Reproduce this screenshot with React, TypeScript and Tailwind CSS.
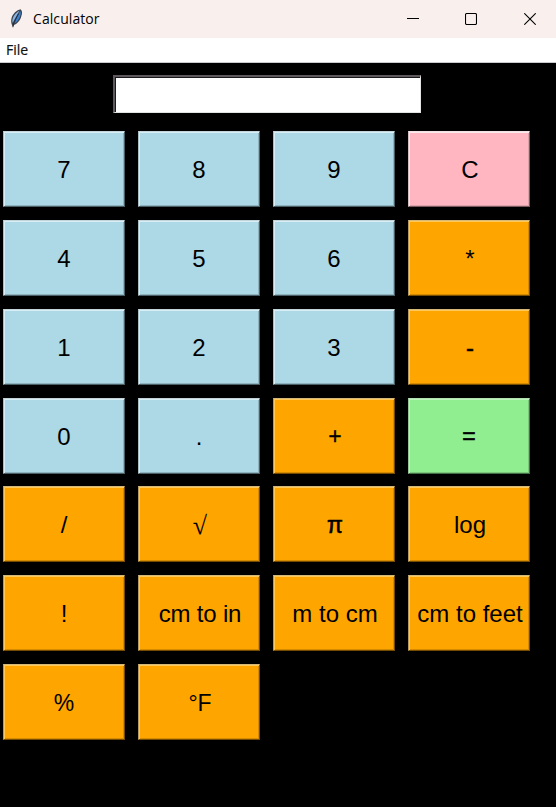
type Tone = "blue" | "pink" | "orange" | "green";

const tones: Record<Tone, string> = {
  blue: "bg-[#add8e6] border-t-[#c3d5da] border-l-[#a9bcc2] border-r-[#4b5f66] border-b-[#4b5f66] shadow-[inset_1px_1px_0_#d9eef4,inset_-1px_-1px_0_#8fb3be]",
  pink: "bg-[#ffb6c1] border-t-[#f0e2e4] border-l-[#d2bdc0] border-r-[#7d585e] border-b-[#7d585e] shadow-[inset_1px_1px_0_#ffe8eb,inset_-1px_-1px_0_#dba2aa]",
  orange: "bg-[#ffa500] border-t-[#d5b978] border-l-[#b59b62] border-r-[#754c00] border-b-[#754c00] shadow-[inset_1px_1px_0_#ffc95a,inset_-1px_-1px_0_#d68a00]",
  green: "bg-[#90ee90] border-t-[#b4e3b4] border-l-[#98c498] border-r-[#456f45] border-b-[#456f45] shadow-[inset_1px_1px_0_#bbf5bb,inset_-1px_-1px_0_#7bc87b]",
};

const keys: { label: string; tone: Tone; text?: string }[] = [
  { label: "7", tone: "blue" },
  { label: "8", tone: "blue" },
  { label: "9", tone: "blue" },
  { label: "C", tone: "pink", text: "pl-[2px]" },
  { label: "4", tone: "blue" },
  { label: "5", tone: "blue" },
  { label: "6", tone: "blue" },
  { label: "*", tone: "orange", text: "pl-[2px]" },
  { label: "1", tone: "blue" },
  { label: "2", tone: "blue" },
  { label: "3", tone: "blue" },
  { label: "-", tone: "orange", text: "pl-[2px] [-webkit-text-stroke:0.500px_black]" },
  { label: "0", tone: "blue" },
  { label: ".", tone: "blue" },
  { label: "+", tone: "orange", text: "pl-[2px] text-[23px] [-webkit-text-stroke:0.300px_black]" },
  { label: "=", tone: "green", text: "text-[23px] [-webkit-text-stroke:0.600px_black]" },
  { label: "/", tone: "orange" },
  { label: "√", tone: "orange", text: "pl-[2px] text-[26px] font-['Liberation_Serif',serif]" },
  { label: "π", tone: "orange", text: "pl-[2px] text-[23px] [-webkit-text-stroke:0.600px_black]" },
  { label: "log", tone: "orange", text: "pl-[2px]" },
  { label: "!", tone: "orange" },
  { label: "cm to in", tone: "orange", text: "pl-[2px] tracking-[-0.200px]" },
  { label: "m to cm", tone: "orange", text: "pl-[2px]" },
  { label: "cm to feet", tone: "orange", text: "pl-[2px]" },
  { label: "%", tone: "orange", text: "text-[23px]" },
  { label: "°F", tone: "orange", text: "pl-[2px] text-[23px]" },
];

function Feather() {
  return (
    <svg width="16" height="20" viewBox="0 0 16 20" className="shrink-0">
      <path d="M12.600 .3C8.800 .9 4.600 5 3.500 9.200c-.6 2.500-.3 4.700.3 6.300l1.200 3.500.9-3.100c3-1.100 5.700-3.800 6.900-7 1.100-3.200 2.200-5.900-.2-8.600z" fill="#3b424b" />
      <path d="M11.600 1.400C8.500 3 5.500 6.300 4.700 9.600c-.5 1.800-.4 3.300 0 4.500C6.600 9.800 9 5.900 11.600 1.400z" fill="#8ab5e2" />
      <path d="M12.300 2c1 2.300.2 4.300-.7 6.600-.9 2.400-2.900 4.700-5.400 6.100C7.800 10.500 9.800 6.200 12.300 2z" fill="#3c80cf" />
      <path d="M10.500 5C8.500 8.500 6.300 12.400 5 17.500" stroke="#1c2a3b" strokeWidth=".8" fill="none" />
    </svg>
  );
}

function TitleBar() {
  return (
    <header className="flex h-[38px] items-center bg-[#f9f0ee] font-['Open_Sans',sans-serif] text-black">
      <div className="flex flex-1 items-center pl-2">
        <Feather />
        <h1 className="ml-[9px] text-[14px] leading-5 tracking-[0.080px]">Calculator</h1>
      </div>
      <svg width="12" height="12" viewBox="0 0 12 12" className="mr-[46px]" aria-label="Minimize">
        <path d="M0 5.500H12" stroke="#000" />
      </svg>
      <svg width="12" height="12" viewBox="0 0 12 12" className="mr-[47px]" aria-label="Maximize">
        <rect x=".5" y=".5" width="11" height="11" rx="1.200" fill="none" stroke="#000" strokeWidth="1.100" />
      </svg>
      <svg width="12" height="12" viewBox="0 0 12 12" className="mr-5" aria-label="Close">
        <path d="M.3 .3L11.700 11.700M11.700 .3L.3 11.700" stroke="#000" strokeWidth="1.100" />
      </svg>
    </header>
  );
}

export default function App() {
  return (
    <div className="flex h-[807px] w-[556px] flex-col overflow-hidden bg-black">
      <TitleBar />
      <nav className="flex h-[25px] items-center border-b border-[#c9cccd] bg-white pl-[6px] font-['Open_Sans',sans-serif] text-[14px] leading-5 text-[#111] [-webkit-text-stroke:0.200px_#111]">
        File
      </nav>
      <main className="flex flex-1 flex-col pt-3">
        <div className="ml-[113px] h-[38px] w-[308px] border-t-2 border-r border-b border-l-2 border-t-[#5e595c] border-r-[#e3e3e3] border-b-[#dfe3e1] border-l-[#5e595c]">
          <div className="h-full border-t border-l border-[#1c191c] bg-white" />
        </div>
        <div className="mt-[18.300px] ml-[3px] grid grid-cols-[repeat(4,122px)] gap-x-[13px] gap-y-[12.800px]">
          {keys.map((k) => (
            <button
              key={k.label}
              className={`flex h-[76px] items-center justify-center border pt-0.5 font-['Liberation_Sans',Arial,sans-serif] whitespace-nowrap text-black ${tones[k.tone]} ${k.text?.includes("text-[2") ? "" : "text-2xl"} ${k.text ?? ""}`}
            >
              {k.label}
            </button>
          ))}
        </div>
      </main>
    </div>
  );
}
